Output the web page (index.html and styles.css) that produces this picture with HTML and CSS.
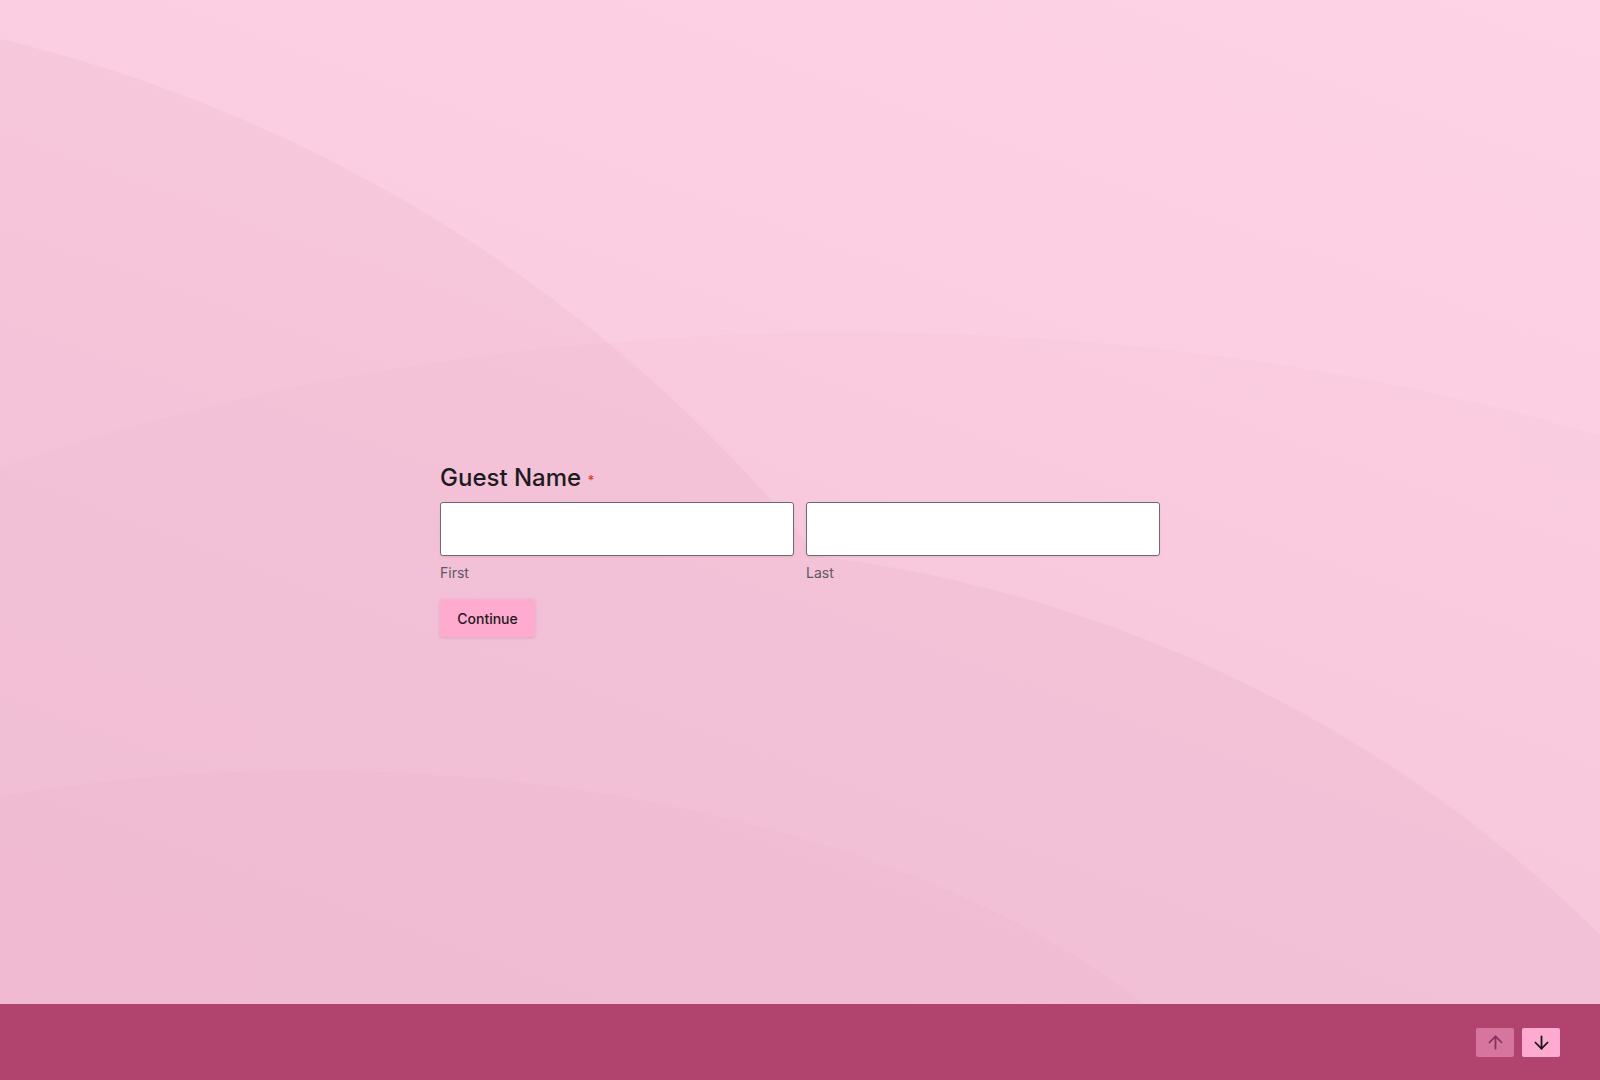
FILE: index.html
```html
<!DOCTYPE html>
<html lang="en">
<head>
<meta charset="utf-8">
<title>Guest Name</title>
<link rel="stylesheet" href="styles.css">
</head>
<body>
<main class="stage">
  <div class="backdrop" aria-hidden="true"></div>
  <div class="backdrop backdrop-soft" aria-hidden="true"></div>
  <div class="backdrop backdrop-low" aria-hidden="true"></div>
  <form class="question">
    <div class="q-title">Guest Name <span class="req">*</span></div>
    <div class="name-row">
      <div class="name-col">
        <input class="field" type="text" aria-label="First">
        <div class="sub">First</div>
      </div>
      <div class="name-col">
        <input class="field" type="text" aria-label="Last">
        <div class="sub">Last</div>
      </div>
    </div>
    <button class="continue" type="button">Continue</button>
  </form>
</main>
<footer class="bar">
  <button class="nav nav-up" type="button" aria-label="Previous">
    <svg viewBox="0 0 24 24" width="21" height="21" fill="none" stroke="currentColor" stroke-width="2" stroke-linecap="round" stroke-linejoin="round"><path d="M12 19V5"/><path d="M5 12l7-7 7 7"/></svg>
  </button>
  <button class="nav nav-down" type="button" aria-label="Next">
    <svg viewBox="0 0 24 24" width="21" height="21" fill="none" stroke="currentColor" stroke-width="2" stroke-linecap="round" stroke-linejoin="round"><path d="M12 5v14"/><path d="M19 12l-7 7-7-7"/></svg>
  </button>
</footer>
</body>
</html>
```
FILE: styles.css
```css
* { box-sizing: border-box; }
html, body { margin: 0; padding: 0; }
body {
  width: 1600px;
  height: 1080px;
  display: flex;
  flex-direction: column;
  font-family: Inter, "Noto Sans", "Liberation Sans", sans-serif;
  color: #1c1b1f;
  overflow: hidden;
}
.stage {
  flex: 1;
  position: relative;
  padding-top: 463px;
  background: linear-gradient(200deg, #fed3e5 0%, #fccfe2 30%, #f8cade 60%, #f5c7db 100%);
}
.backdrop {
  position: absolute;
  inset: 0;
  opacity: 0.04;
  background:
    radial-gradient(circle 1355px at 650px 1900px, #b0306a 99.9%, transparent 100%),
    radial-gradient(circle 1503px at -350px 1500px, #b0306a 99.9%, transparent 100%);
}
.backdrop-soft {
  opacity: 0.018;
  background:
    radial-gradient(ellipse 1500px 770px at 850px 1102px, #b0306a 99.9%, transparent 100%);
}
.backdrop-low {
  opacity: 0.022;
  background:
    radial-gradient(ellipse 1000px 520px at 310px 1290px, #b0306a 99.8%, transparent 100%);
}
.question {
  position: relative;
  width: 720px;
  margin: 0 auto;
}
.q-title {
  font-size: 24px;
  line-height: 30px;
  font-weight: 450;
  color: #1d1b1e;
  margin-bottom: 9px;
}
.req {
  color: #d6412f;
  font-size: 13px;
  line-height: 0;
  font-weight: 600;
  vertical-align: 1px;
}
.name-row {
  display: flex;
  gap: 12px;
}
.name-col {
  flex: 1;
}
.field {
  display: block;
  width: 100%;
  height: 54px;
  margin: 0;
  border: 1px solid #6e6a74;
  border-radius: 3px;
  background: #ffffff;
  box-shadow: 0 1px 2px rgba(0, 0, 0, 0.08);
  font: inherit;
  padding: 0 12px;
}
.sub {
  margin-top: 7px;
  font-size: 14px;
  line-height: 20px;
  color: #5e5862;
}
.continue {
  margin-top: 16px;
  width: 95px;
  height: 38px;
  padding: 0;
  border: none;
  border-radius: 3px;
  background: #ffabcf;
  box-shadow: 0 1px 3px rgba(120, 40, 80, 0.18);
  font-family: inherit;
  font-size: 14px;
  font-weight: 450;
  color: #1e1a1d;
}
.bar {
  height: 76px;
  flex: none;
  background: #b0446f;
  display: flex;
  align-items: center;
  justify-content: flex-end;
  gap: 8px;
  padding-right: 40px;
}
.nav {
  width: 38px;
  height: 29px;
  padding: 0;
  border: none;
  border-radius: 2px;
  display: flex;
  align-items: center;
  justify-content: center;
}
.nav-up {
  background: #d6769f;
  color: #86315c;
}
.nav-down {
  background: #ffaad0;
  color: #1a1418;
}
```
